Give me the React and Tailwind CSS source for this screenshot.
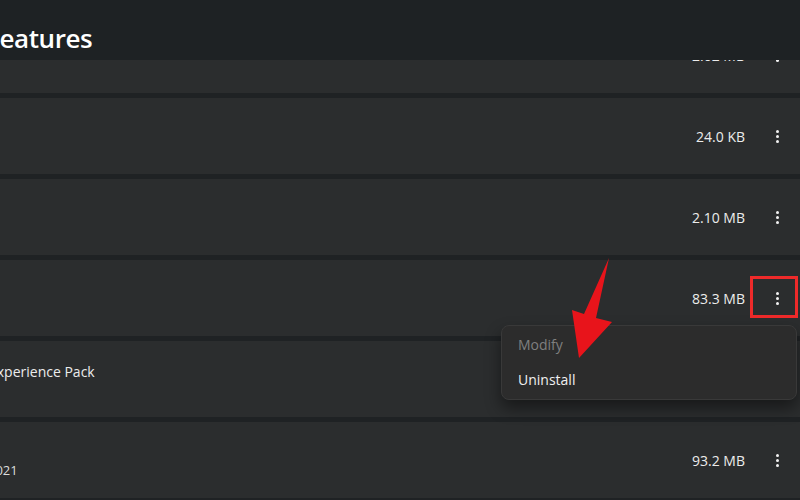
import React from "react";

function Kebab() {
  return (
    <div className="w-[40px] h-[40px] flex flex-col items-center justify-center gap-[2px]">
      <span className="w-[3px] h-[3px] rounded-full bg-[#f2f2f2]" />
      <span className="w-[3px] h-[3px] rounded-full bg-[#f2f2f2]" />
      <span className="w-[3px] h-[3px] rounded-full bg-[#f2f2f2]" />
    </div>
  );
}

function Row({ size, left, className = "" }) {
  return (
    <div className={"h-[76px] shrink-0 bg-[#2b2d2e] flex items-stretch " + className}>
      <div className="flex-1 min-w-0 relative">{left}</div>
      <div className="flex items-center gap-[12px] pr-[3px]">
        <span className="text-[14px] text-[#ececec]">{size}</span>
        <Kebab />
      </div>
    </div>
  );
}

export default function App() {
  return (
    <div className="w-[800px] h-[500px] overflow-hidden bg-[#1f2224] flex flex-col relative font-['Open_Sans',sans-serif]">
      <div className="h-[60px] shrink-0 bg-[#1e2224] relative z-10 pt-[22px]">
        <div className="-ml-[14px] text-[26px] leading-[32px] font-semibold text-white tracking-[-0.4px]">Features</div>
      </div>
      <div className="flex-1 overflow-hidden flex flex-col gap-[5px]">
        <Row size="2.02 MB" className="-mt-[43px]" />
        <Row size="24.0 KB" />
        <Row size="2.10 MB" />
        <Row size="83.3 MB" />
        <Row
          size=""
          left={
            <div className="pt-[21px] -ml-[11px] text-[14px] leading-[20px] text-[#ececec]">Experience Pack</div>
          }
        />
        <Row
          size="93.2 MB"
          left={
            <div className="pt-[39px] -ml-[12px] text-[13px] leading-[18px] text-[#dcdcdc]">2021</div>
          }
        />
      </div>

      {/* highlight box */}
      <div className="absolute left-[750px] top-[276px] w-[48px] h-[42px] border-[3px] border-[#ee2a2a] z-20" />

      {/* context menu */}
      <div className="absolute left-[501px] top-[325px] w-[296px] h-[75px] rounded-[8px] bg-[#2c2c2c] border border-[#393939] shadow-[0_8px_16px_rgba(0,0,0,0.45)] z-20 flex flex-col px-[16px] pt-[7px]">
        <div className="h-[22px] flex items-center text-[14px] text-[#7f7f7f]">Modify</div>
        <div className="h-[13px]" />
        <div className="h-[22px] flex items-center text-[14px] text-[#f0f0f0]">Uninstall</div>
      </div>

      {/* arrow */}
      <svg className="absolute left-0 top-0 z-30" width="800" height="500" viewBox="0 0 800 500">
        <polygon points="609,258 596,318 612,322 579,358 572,310 584,314" fill="#e8141b" />
      </svg>
    </div>
  );
}
